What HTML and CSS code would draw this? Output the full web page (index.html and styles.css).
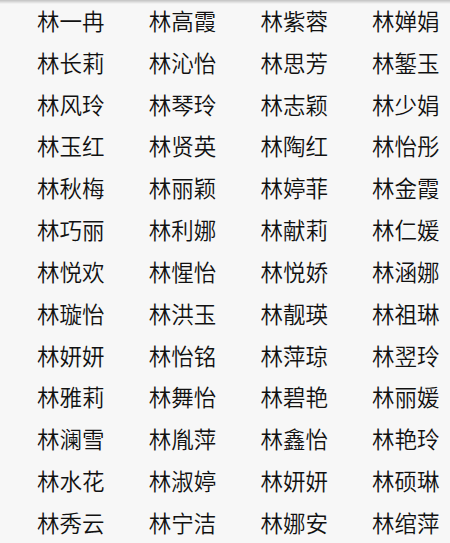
FILE: index.html
```html
<!DOCTYPE html>
<html lang="zh-CN">
<head>
<meta charset="utf-8">
<title>名单</title>
<link rel="stylesheet" href="styles.css">
</head>
<body>
<div class="shadow"></div>
<div class="grid">
<div class="cell">林一冉</div><div class="cell">林高霞</div><div class="cell">林紫蓉</div><div class="cell">林婵娟</div>
<div class="cell">林长莉</div><div class="cell">林沁怡</div><div class="cell">林思芳</div><div class="cell">林錾玉</div>
<div class="cell">林风玲</div><div class="cell">林琴玲</div><div class="cell">林志颖</div><div class="cell">林少娟</div>
<div class="cell">林玉红</div><div class="cell">林贤英</div><div class="cell">林陶红</div><div class="cell">林怡彤</div>
<div class="cell">林秋梅</div><div class="cell">林丽颖</div><div class="cell">林婷菲</div><div class="cell">林金霞</div>
<div class="cell">林巧丽</div><div class="cell">林利娜</div><div class="cell">林献莉</div><div class="cell">林仁媛</div>
<div class="cell">林悦欢</div><div class="cell">林惺怡</div><div class="cell">林悦娇</div><div class="cell">林涵娜</div>
<div class="cell">林璇怡</div><div class="cell">林洪玉</div><div class="cell">林靓瑛</div><div class="cell">林祖琳</div>
<div class="cell">林妍妍</div><div class="cell">林怡铭</div><div class="cell">林萍琼</div><div class="cell">林翌玲</div>
<div class="cell">林雅莉</div><div class="cell">林舞怡</div><div class="cell">林碧艳</div><div class="cell">林丽媛</div>
<div class="cell">林澜雪</div><div class="cell">林胤萍</div><div class="cell">林鑫怡</div><div class="cell">林艳玲</div>
<div class="cell">林水花</div><div class="cell">林淑婷</div><div class="cell">林妍妍</div><div class="cell">林硕琳</div>
<div class="cell">林秀云</div><div class="cell">林宁洁</div><div class="cell">林娜安</div><div class="cell">林绾萍</div>
</div>
</body>
</html>
```
FILE: styles.css
```css
html, body {
  margin: 0;
  padding: 0;
  background: #f7f7f7;
  overflow: hidden;
}
body {
  width: 450px;
  height: 543px;
  position: relative;
  font-family: "Noto Sans CJK SC", "Noto Sans", sans-serif;
  color: #111;
}
.shadow {
  position: absolute;
  left: 0;
  top: 0;
  width: 100%;
  height: 4px;
  background: linear-gradient(to bottom, rgba(0,0,0,0.22), rgba(0,0,0,0));
}
.grid {
  display: grid;
  grid-template-columns: 111.7px 111.7px 111.7px 76px;
  grid-auto-rows: 41.83px;
  padding-left: 37px;
}
.cell {
  font-size: 22.5px;
  font-weight: 350;
  line-height: 41.83px;
  white-space: nowrap;
}
```
